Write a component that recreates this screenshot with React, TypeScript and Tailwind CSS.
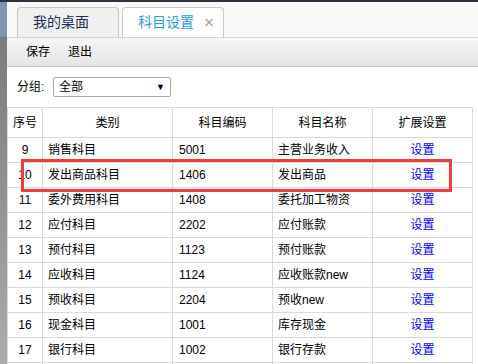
import React from "react";

const rows: [string, string, string, string][] = [
  ["9", "销售科目", "5001", "主营业务收入"],
  ["10", "发出商品科目", "1406", "发出商品"],
  ["11", "委外费用科目", "1408", "委托加工物资"],
  ["12", "应付科目", "2202", "应付账款"],
  ["13", "预付科目", "1123", "预付账款"],
  ["14", "应收科目", "1124", "应收账款new"],
  ["15", "预收科目", "2204", "预收new"],
  ["16", "现金科目", "1001", "库存现金"],
  ["17", "银行科目", "1002", "银行存款"],
];

export default function App() {
  const font = { fontFamily: '"Liberation Sans", "Noto Sans CJK SC", sans-serif' };
  return (
    <div
      className="w-[478px] h-[364px] overflow-hidden flex flex-col bg-white relative text-[12px] text-black"
      style={font}
    >
      <div className="h-[2px] bg-[#2b3440] shrink-0" />
      <div className="flex flex-1 min-h-0">
        <div className="w-[7px] flex flex-col shrink-0">
          <div className="h-[35px] bg-[#7f93b3]" />
          <div className="flex-1 bg-gradient-to-b from-[#7b7b7b] to-[#acacac]" />
        </div>
        <div className="flex-1 flex flex-col min-w-0">
          {/* tab bar */}
          <div className="h-[36px] bg-[#f8f8f8] border-b border-[#d6d6d6] flex items-end pl-[10px] gap-[3px] shrink-0">
            <div className="w-[102px] h-[30px] bg-[#f0f0f0] border border-b-0 border-[#c9c9c9] rounded-t-[4px] flex items-center pl-[15px] text-[14px] text-[#1f2f4f]">
              我的桌面
            </div>
            <div className="w-[102px] h-[30px] bg-white border border-b-0 border-[#c9c9c9] rounded-t-[4px] flex items-center pl-[15px] text-[14px] text-[#27a0da]">
              <span>科目设置</span>
              <span className="ml-[10px] text-[#a0a0a0] text-[17px] leading-none">×</span>
            </div>
          </div>
          {/* toolbar */}
          <div className="h-[29px] bg-gradient-to-b from-[#f6f6f6] to-[#e5e5e5] border-b border-[#c3c8cd] flex items-center pl-[19px] gap-[18px] shrink-0 text-[12px]">
            <span>保存</span>
            <span>退出</span>
          </div>
          {/* filter */}
          <div className="h-[40px] flex items-center pl-[10px] shrink-0">
            <span className="w-[36px]">分组:</span>
            <div className="w-[118px] h-[20px] border border-[#a9a9a9] rounded-[2px] flex items-center justify-between pl-[5px] pr-[5px]">
              <span>全部</span>
              <span className="text-[9px] leading-none">▼</span>
            </div>
          </div>
          {/* table */}
          <table className="border-collapse table-fixed w-[466px]">
            <colgroup>
              <col className="w-[35px]" />
              <col className="w-[130px]" />
              <col className="w-[100px]" />
              <col className="w-[100px]" />
              <col className="w-[100px]" />
            </colgroup>
            <thead>
              <tr className="h-[30px]">
                {["序号", "类别", "科目编码", "科目名称", "扩展设置"].map((h) => (
                  <th key={h} className="border border-[#d9d9d9] font-normal text-center p-0">
                    {h}
                  </th>
                ))}
              </tr>
            </thead>
            <tbody>
              {rows.map((r) => (
                <tr key={r[0]} className="h-[25px]">
                  <td className="border border-[#d9d9d9] text-center p-0">{r[0]}</td>
                  <td className="border border-[#d9d9d9] pl-[5px] p-0">{r[1]}</td>
                  <td className="border border-[#d9d9d9] pl-[6px] p-0">{r[2]}</td>
                  <td className="border border-[#d9d9d9] pl-[5px] p-0">{r[3]}</td>
                  <td className="border border-[#d9d9d9] text-center p-0 text-[#0000ff]">设置</td>
                </tr>
              ))}
              <tr className="h-[25px]">
                <td className="border border-[#d9d9d9]" />
                <td className="border border-[#d9d9d9]" />
                <td className="border border-[#d9d9d9]" />
                <td className="border border-[#d9d9d9]" />
                <td className="border border-[#d9d9d9]" />
              </tr>
            </tbody>
          </table>
        </div>
      </div>
      <div className="absolute left-[21px] top-[159px] w-[431px] h-[33px] border-[3px] border-[#f23b3b] pointer-events-none" />
    </div>
  );
}
